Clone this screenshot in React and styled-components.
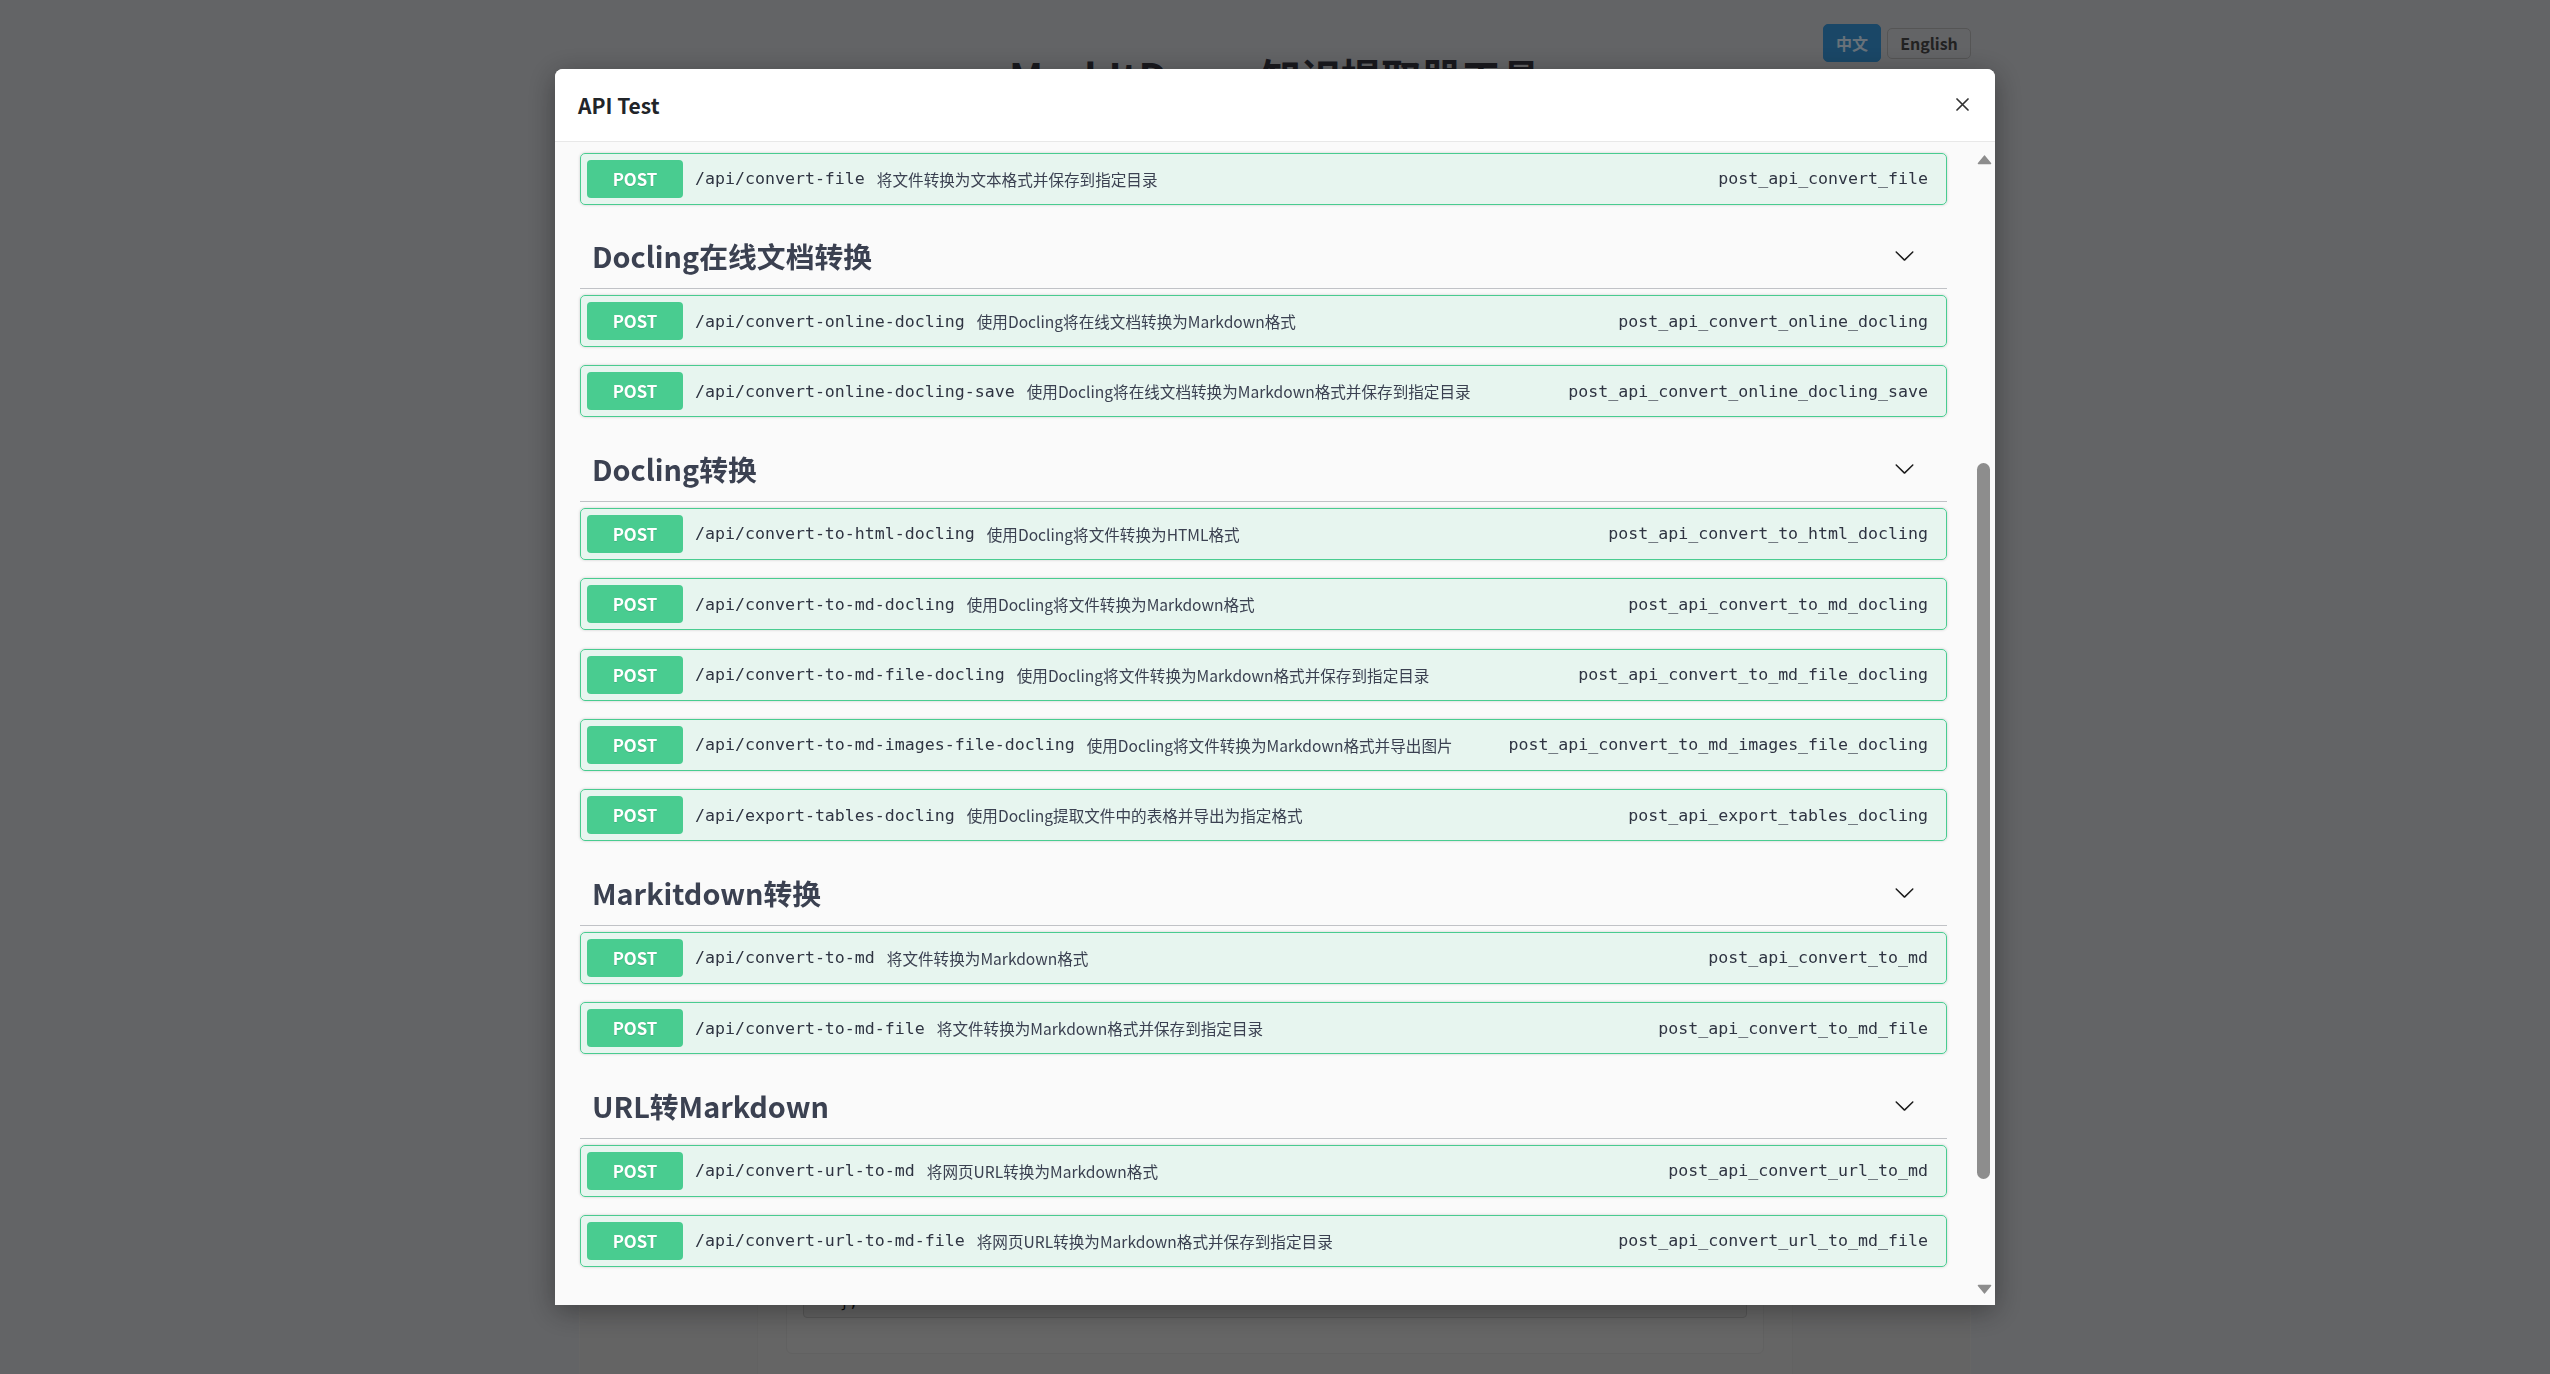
import React, { useLayoutEffect, useRef, useState } from "react";
import styled, { createGlobalStyle } from "styled-components";

const GlobalStyle = createGlobalStyle`
  html, body { margin: 0; padding: 0; }
  body {
    background: #c6c8cc;
    font-family: "Noto Sans CJK SC", "Noto Sans", sans-serif;
    overflow: hidden;
  }
  * { box-sizing: border-box; }
`;

const MONO = `"DejaVu Sans Mono", "Liberation Mono", monospace`;
const SANS = `"Noto Sans CJK SC", "Noto Sans", sans-serif`;

/* ---------- page behind the modal ---------- */
const Page = styled.div`
  position: relative;
  height: 100vh;
  overflow: hidden;
  padding-top: 52px;
`;

const LangSwitch = styled.div`
  position: absolute;
  top: 24px;
  right: 579px;
  display: flex;
  align-items: center;
  gap: 6px;
`;

const LangButton = styled.button`
  font-family: ${SANS};
  font-weight: 700;
  font-size: 16px;
  border-radius: 5px;
  cursor: pointer;
  padding: 0;
  width: ${(p) => (p.$active ? "58px" : "84px")};
  height: ${(p) => (p.$active ? "38px" : "31px")};
  background: ${(p) => (p.$active ? "#348ece" : "#c6c8cc")};
  color: ${(p) => (p.$active ? "#cfe3f3" : "#444")};
  border: 1px solid ${(p) => (p.$active ? "#348ece" : "#aaaaaa")};
`;

const PageTitle = styled.h1`
  margin: 0;
  text-align: center;
  font-family: ${SANS};
  font-size: 40px;
  line-height: 48px;
  font-weight: 700;
  color: #32323c;
`;

const Container = styled.div`
  width: 1392px;
  margin: 30px auto 0;
  min-height: 1400px;
  background: #c8c8c9;
  border-left: 1px solid #cdcdcd;
  border-right: 1px solid #cdcdcd;
`;

const Panel = styled.div`
  width: 1036px;
  margin: 0 auto;
  min-height: 1400px;
  padding-top: 20px;
  background: #cacaca;
  border-left: 1px solid #c4c4c4;
  border-right: 1px solid #c4c4c4;
`;

const Card = styled.div`
  width: 978px;
  margin: 0 auto;
  padding: 16px 16px 35px;
  background: #cccccc;
  border: 1px solid #c2c2c2;
  border-radius: 6px;
`;

const CodeBlock = styled.div`
  height: 1151px;
  display: flex;
  flex-direction: column;
  justify-content: flex-end;
  padding: 0 36px 6px;
  background: #c4c4c4;
  border: 1px solid #adadad;
  border-radius: 4px;
  font-family: ${MONO};
  font-size: 15px;
  color: #111;
`;

/* ---------- modal ---------- */
const Overlay = styled.div`
  position: fixed;
  inset: 0;
  background: rgba(0, 0, 0, 0.5);
  display: flex;
  justify-content: center;
  align-items: flex-start;
`;

const Modal = styled.div`
  width: 1440px;
  height: 90vh;
  margin-top: 5vh;
  display: flex;
  flex-direction: column;
  background: #ffffff;
  border-radius: 8px 8px 0 0;
  overflow: hidden;
  box-shadow: 0 6px 28px rgba(0, 0, 0, 0.35);
`;

const ModalHeader = styled.div`
  flex: none;
  height: 73px;
  display: flex;
  align-items: center;
  justify-content: space-between;
  padding: 0 25px 0 23px;
  background: #ffffff;
  border-bottom: 1px solid #e8e8e8;
`;

const ModalTitle = styled.h2`
  margin: 0;
  font-family: ${SANS};
  font-size: 21px;
  font-weight: 700;
  color: #212529;
`;

const CloseButton = styled.button`
  width: 16px;
  height: 16px;
  padding: 0;
  border: none;
  background: transparent;
  display: flex;
  align-items: center;
  justify-content: center;
  cursor: pointer;
  color: #333;
`;

const Body = styled.div`
  flex: 1;
  min-height: 0;
  display: flex;
  background: #fafafa;
`;

const ScrollArea = styled.div`
  flex: 1;
  position: relative;
  overflow-y: scroll;
  scrollbar-width: none;
  padding: 60px 26px 178px 25px;
  &::-webkit-scrollbar {
    display: none;
  }
`;

const ScrollBar = styled.div`
  flex: none;
  width: 22px;
  display: flex;
  flex-direction: column;
  background: #fafafa;
`;

const ArrowButton = styled.div`
  flex: none;
  height: 30px;
  display: flex;
  justify-content: center;
  padding-top: ${(p) => (p.$down ? "9px" : "13px")};
  svg {
    display: block;
  }
`;

const Track = styled.div`
  flex: 1;
  position: relative;
`;

const Thumb = styled.div`
  position: absolute;
  left: 4px;
  right: 5px;
  background: #8d8d8d;
  border-radius: 7px;
`;

const TagSection = styled.section``;

const TagHeader = styled.div`
  display: flex;
  align-items: center;
  justify-content: space-between;
  padding: 12px 32px 12px 12px;
  margin-bottom: 6px;
  border-bottom: 1px solid rgba(59, 65, 81, 0.3);
`;

const TagTitle = styled.h3`
  margin: 0;
  font-family: ${SANS};
  font-size: 28.8px;
  line-height: 41px;
  font-weight: 700;
  color: #3b4151;
`;

const Chevron = styled.svg`
  width: 21px;
  height: 21px;
  flex: none;
  fill: #1b1b1b;
`;

const OpRow = styled.div`
  display: flex;
  align-items: center;
  padding: 6px;
  margin-bottom: 18.4px;
  background: rgba(73, 204, 144, 0.1);
  border: 1px solid #49cc90;
  border-radius: 5px;
  box-shadow: 0 0 3px rgba(0, 0, 0, 0.19);
`;

const MethodBadge = styled.span`
  flex: none;
  width: 96px;
  height: 38px;
  display: flex;
  align-items: center;
  justify-content: center;
  background: #49cc90;
  border-radius: 4px;
  color: #ffffff;
  font-family: ${SANS};
  font-size: 16.8px;
  font-weight: 700;
  text-shadow: 0 1px 0 rgba(0, 0, 0, 0.1);
`;

const OpPath = styled.span`
  padding: 0 12px;
  font-family: ${MONO};
  font-size: 16.6px;
  color: #2f3442;
  white-space: nowrap;
`;

const OpDesc = styled.span`
  font-family: ${SANS};
  font-size: 15.6px;
  color: #3b4151;
  white-space: nowrap;
`;

const OpId = styled.span`
  margin-left: auto;
  padding-right: 12px;
  font-family: ${MONO};
  font-size: 16.6px;
  color: #2f3442;
  white-space: nowrap;
`;

const sections = [
  {
    title: "基础转换",
    ops: [
      ["/api/convert", "将文件转换为文本格式", "post_api_convert"],
      ["/api/convert-batch", "批量将文件转换为文本格式", "post_api_convert_batch"],
      ["/api/convert-to-txt", "将文件转换为TXT格式", "post_api_convert_to_txt"],
      ["/api/convert-to-json", "将文件转换为JSON格式", "post_api_convert_to_json"],
      ["/api/convert-text", "将文本内容转换为指定格式", "post_api_convert_text"],
      ["/api/convert-file", "将文件转换为文本格式并保存到指定目录", "post_api_convert_file", true],
    ],
  },
  {
    title: "Docling在线文档转换",
    ops: [
      ["/api/convert-online-docling", "使用Docling将在线文档转换为Markdown格式", "post_api_convert_online_docling"],
      ["/api/convert-online-docling-save", "使用Docling将在线文档转换为Markdown格式并保存到指定目录", "post_api_convert_online_docling_save"],
    ],
  },
  {
    title: "Docling转换",
    ops: [
      ["/api/convert-to-html-docling", "使用Docling将文件转换为HTML格式", "post_api_convert_to_html_docling"],
      ["/api/convert-to-md-docling", "使用Docling将文件转换为Markdown格式", "post_api_convert_to_md_docling"],
      ["/api/convert-to-md-file-docling", "使用Docling将文件转换为Markdown格式并保存到指定目录", "post_api_convert_to_md_file_docling"],
      ["/api/convert-to-md-images-file-docling", "使用Docling将文件转换为Markdown格式并导出图片", "post_api_convert_to_md_images_file_docling"],
      ["/api/export-tables-docling", "使用Docling提取文件中的表格并导出为指定格式", "post_api_export_tables_docling"],
    ],
  },
  {
    title: "Markitdown转换",
    ops: [
      ["/api/convert-to-md", "将文件转换为Markdown格式", "post_api_convert_to_md"],
      ["/api/convert-to-md-file", "将文件转换为Markdown格式并保存到指定目录", "post_api_convert_to_md_file"],
    ],
  },
  {
    title: "URL转Markdown",
    ops: [
      ["/api/convert-url-to-md", "将网页URL转换为Markdown格式", "post_api_convert_url_to_md"],
      ["/api/convert-url-to-md-file", "将网页URL转换为Markdown格式并保存到指定目录", "post_api_convert_url_to_md_file"],
    ],
  },
];

function ChevronDown() {
  return (
    <Chevron viewBox="0 0 20 20" aria-hidden="true">
      <path d="M17.418 6.109c.272-.268.709-.268.979 0s.271.701 0 .969l-7.908 7.83c-.27.268-.707.268-.979 0l-7.908-7.83c-.27-.268-.27-.701 0-.969.271-.268.709-.268.979 0L10 13.25l7.418-7.141z" />
    </Chevron>
  );
}

function ArrowIcon({ down }) {
  return (
    <svg width="15" height="10" viewBox="0 0 15 10" aria-hidden="true">
      <path
        d={down ? "M1.5 1.5 L13.5 1.5 L7.5 8.8 Z" : "M7.5 1.2 L13.5 8.5 L1.5 8.5 Z"}
        fill="#8d8d8d"
        stroke="#8d8d8d"
        strokeWidth="1.6"
        strokeLinejoin="round"
      />
    </svg>
  );
}

export default function App() {
  const scrollRef = useRef(null);
  const targetRef = useRef(null);
  const trackRef = useRef(null);
  const [thumb, setThumb] = useState({ top: 0, height: 0 });

  useLayoutEffect(() => {
    const s = scrollRef.current;
    const t = targetRef.current;
    const tr = trackRef.current;
    if (!s || !t || !tr) return;
    s.scrollTop = t.offsetTop - 11.5;
    const trackH = tr.clientHeight;
    const update = () => {
      const ratio = s.clientHeight / s.scrollHeight;
      setThumb({
        top: (s.scrollTop / s.scrollHeight) * trackH,
        height: ratio * trackH,
      });
    };
    update();
    s.addEventListener("scroll", update);
    return () => s.removeEventListener("scroll", update);
  }, []);

  return (
    <>
      <GlobalStyle />
      <Page>
        <LangSwitch>
          <LangButton $active>中文</LangButton>
          <LangButton>English</LangButton>
        </LangSwitch>
        <PageTitle>MarkItDown 知识提取器工具</PageTitle>
        <Container>
          <Panel>
            <Card>
              <CodeBlock>
                <div>{"},"}</div>
              </CodeBlock>
            </Card>
          </Panel>
        </Container>
      </Page>
      <Overlay>
        <Modal>
          <ModalHeader>
            <ModalTitle>API Test</ModalTitle>
            <CloseButton aria-label="close">
              <svg width="13" height="13" viewBox="0 0 13 13">
                <path d="M1 1 L12 12 M12 1 L1 12" stroke="#333" strokeWidth="1.7" strokeLinecap="round" />
              </svg>
            </CloseButton>
          </ModalHeader>
          <Body>
            <ScrollArea ref={scrollRef}>
              {sections.map((s) => (
                <TagSection key={s.title}>
                  <TagHeader>
                    <TagTitle>{s.title}</TagTitle>
                    <ChevronDown />
                  </TagHeader>
                  {s.ops.map(([path, desc, id, target]) => (
                    <OpRow key={path} ref={target ? targetRef : undefined}>
                      <MethodBadge>POST</MethodBadge>
                      <OpPath>{path}</OpPath>
                      <OpDesc>{desc}</OpDesc>
                      <OpId>{id}</OpId>
                    </OpRow>
                  ))}
                </TagSection>
              ))}
            </ScrollArea>
            <ScrollBar>
              <ArrowButton>
                <ArrowIcon />
              </ArrowButton>
              <Track ref={trackRef}>
                <Thumb style={{ top: thumb.top, height: thumb.height }} />
              </Track>
              <ArrowButton $down>
                <ArrowIcon down />
              </ArrowButton>
            </ScrollBar>
          </Body>
        </Modal>
      </Overlay>
    </>
  );
}
